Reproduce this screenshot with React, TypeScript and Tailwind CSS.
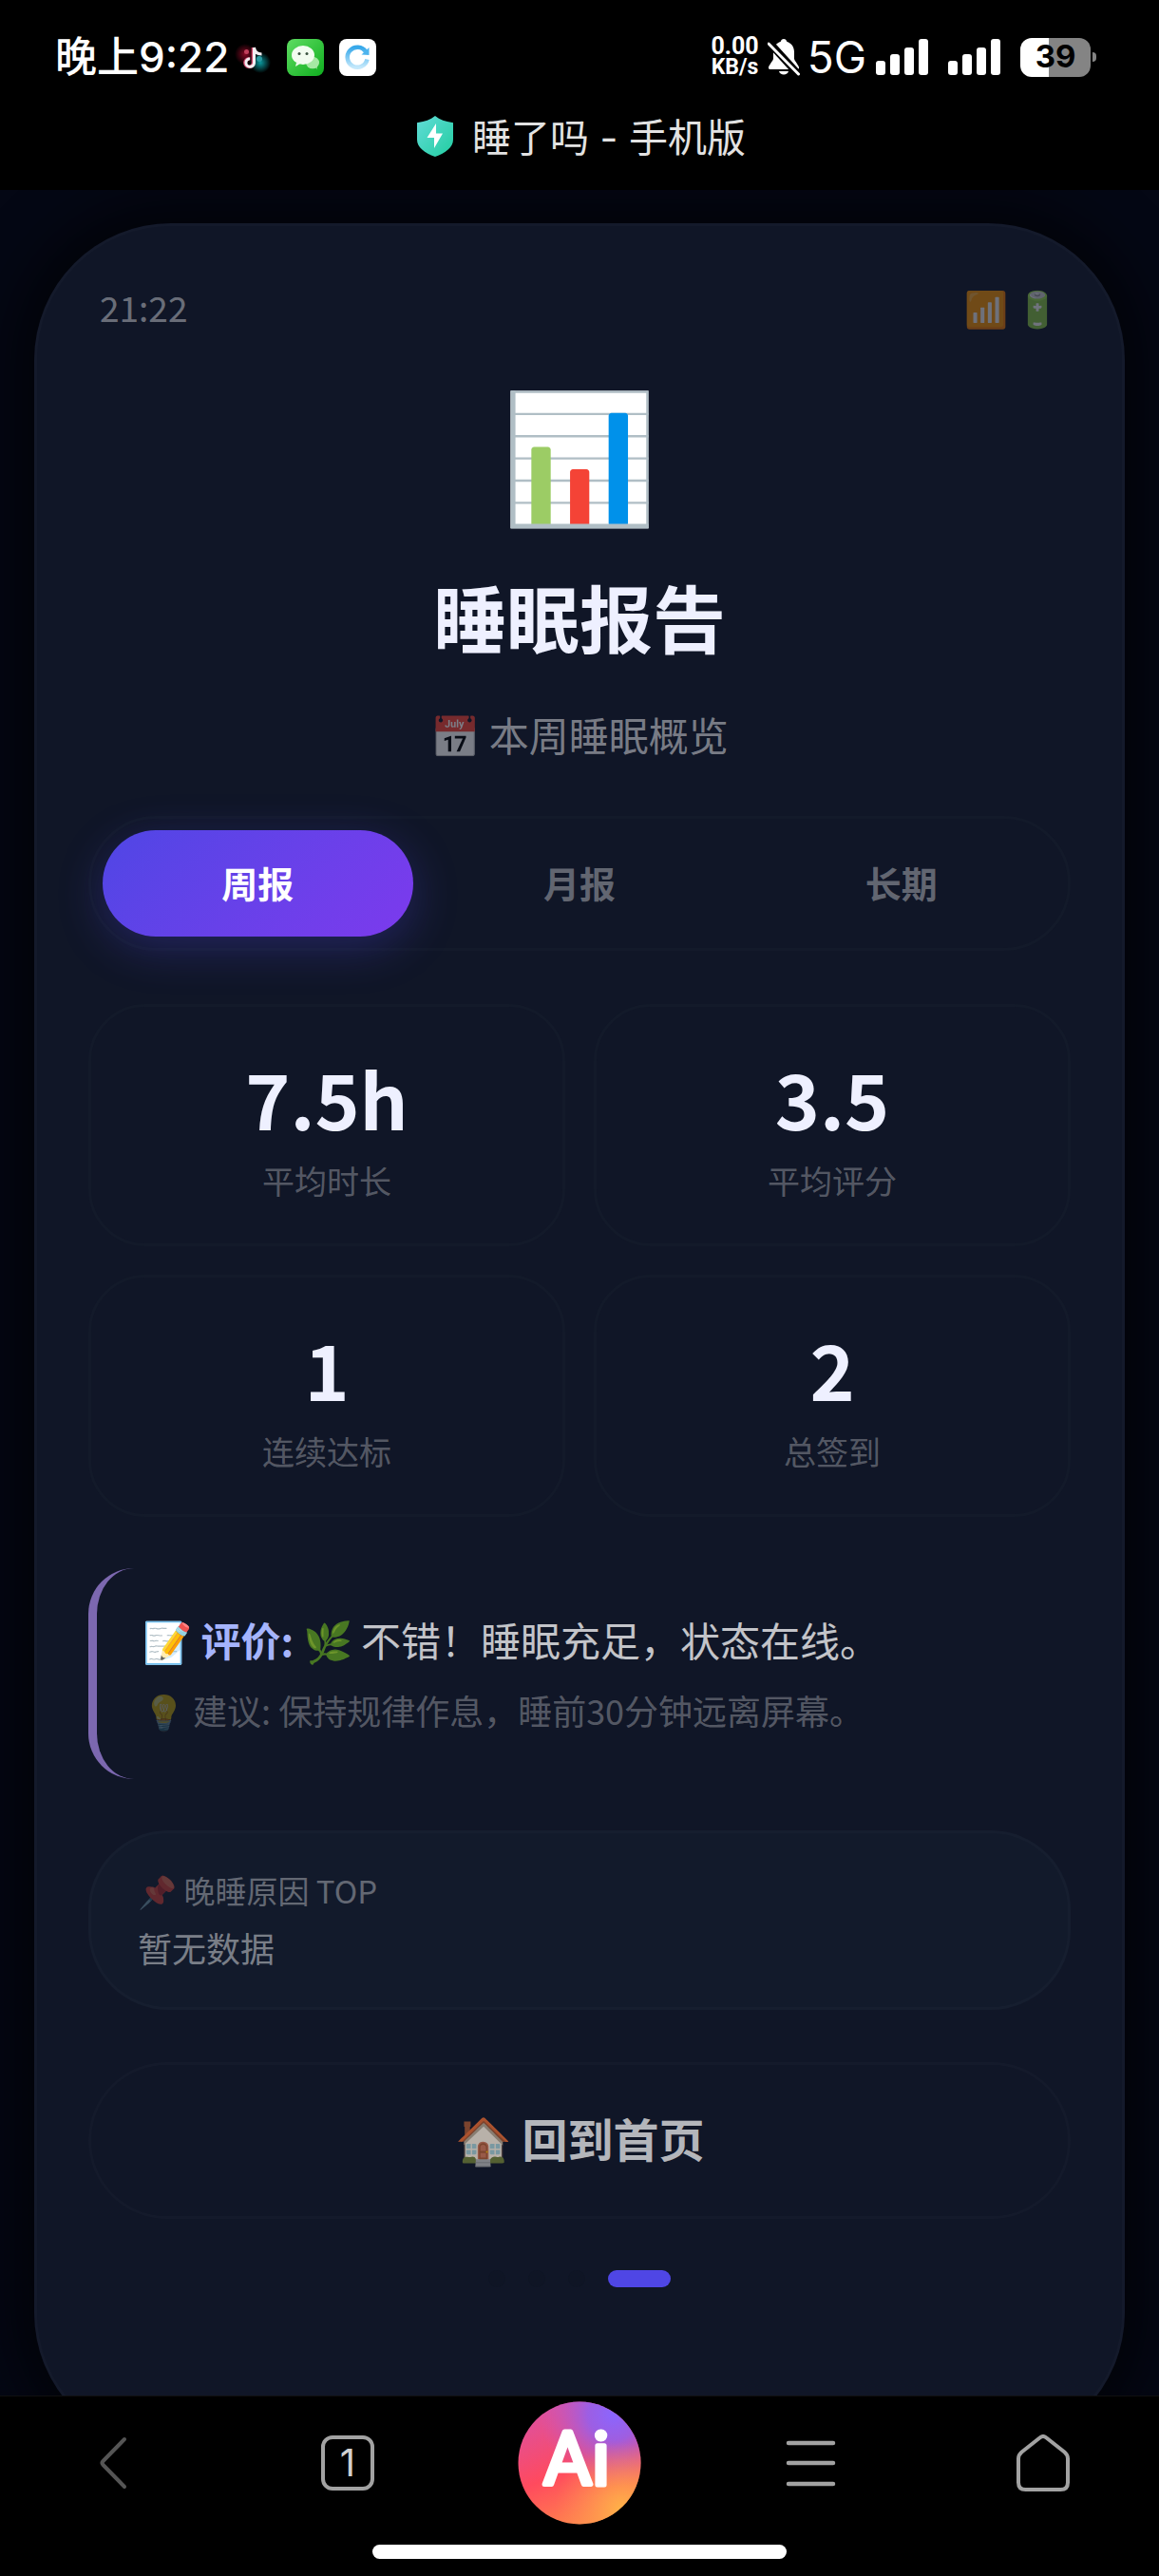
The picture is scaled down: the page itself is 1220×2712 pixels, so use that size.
import { useState } from 'react'
import { clsx } from 'clsx'

const TABS = ['周报', '月报', '长期']

const STATS = [
  { value: '7.5h', label: '平均时长' },
  { value: '3.5', label: '平均评分' },
  { value: '1', label: '连续达标' },
  { value: '2', label: '总签到' },
]

const PAGES = [0, 1, 2, 3]

function TiktokIcon() {
  return (
    <svg viewBox="0 0 39 39" className="size-[39px]">
      <defs>
        <radialGradient id="tkRed">
          <stop offset="0" stopColor="#e0103c" stopOpacity="0.6" />
          <stop offset="1" stopColor="#e0103c" stopOpacity="0" />
        </radialGradient>
        <radialGradient id="tkCyan">
          <stop offset="0" stopColor="#10d8e0" stopOpacity="0.7" />
          <stop offset="1" stopColor="#10d8e0" stopOpacity="0" />
        </radialGradient>
      </defs>
      <circle cx="11" cy="16" r="11" fill="url(#tkRed)" />
      <circle cx="27" cy="25" r="11" fill="url(#tkCyan)" />
      <circle cx="12.500" cy="13.500" r="2.500" fill="#c2405c" />
      <circle cx="26" cy="21" r="3" fill="#2b9aa2" />
      <path d="M20.500 9v16.500a4.300 4.300 0 1 1-4.300-4.800" fill="none" stroke="#d0456b" strokeWidth="3.600" transform="translate(-1 0)" />
      <path d="M20.500 9v16.500a4.300 4.300 0 1 1-4.300-4.800M20.500 9c.5 4.500 3.500 7 8 7" fill="none" stroke="#f3eef2" strokeWidth="3" />
    </svg>
  )
}

function WechatIcon() {
  return (
    <svg viewBox="0 0 39 39" className="size-[39px]">
      <defs>
        <linearGradient id="wxBg" x1="0" y1="0" x2="1" y2="1">
          <stop offset="0" stopColor="#5fdc62" />
          <stop offset="1" stopColor="#0fae1f" />
        </linearGradient>
      </defs>
      <rect width="39" height="39" rx="8" fill="url(#wxBg)" />
      <ellipse cx="27" cy="25" rx="7" ry="6.300" fill="#a6e9a4" />
      <path d="M29 29l3 3-1-4z" fill="#a6e9a4" />
      <ellipse cx="17" cy="17" rx="12" ry="10" fill="#f2fcf0" />
      <path d="M10 25l-1 4 5-3z" fill="#f2fcf0" />
      <circle cx="13" cy="15.500" r="1.500" fill="#3b5340" />
      <circle cx="21" cy="15.500" r="1.500" fill="#3b5340" />
    </svg>
  )
}

function SyncIcon() {
  return (
    <svg viewBox="0 0 39 39" className="size-[39px]">
      <defs>
        <linearGradient id="syncRing" x1="0" y1="0" x2="0" y2="1">
          <stop offset="0" stopColor="#36a8ea" />
          <stop offset="1" stopColor="#c4e8fb" />
        </linearGradient>
      </defs>
      <rect width="39" height="39" rx="8" fill="#fff" />
      <path d="M28 13.500a10.500 10.500 0 1 0 1.500 8" fill="none" stroke="url(#syncRing)" strokeWidth="4.500" />
      <path d="M31.500 9v8l-8-.5z" fill="#4db4ee" />
    </svg>
  )
}

function MutedBell() {
  return (
    <svg viewBox="0 0 34 40" className="h-10 w-[34px]" fill="#fff">
      <path d="M17 1c-1.600 0-3 1.200-3.200 2.700C9 5.300 6 9.500 6 14.500v7.300c0 2-4.500 6.500-5 9.200-.2 1.200.5 2 1.800 2h28.400c1.300 0 2-.8 1.800-2-.5-2.700-5-7.200-5-9.200v-7.300c0-5-3-9.200-7.800-10.800C20 2.200 18.600 1 17 1z" />
      <path d="M12 35h10c-.5 2.300-2.500 3.500-5 3.500S12.500 37.300 12 35z" />
      <path d="M1 4l32 35" stroke="#000" strokeWidth="8" />
      <path d="M1 6l31.500 32" stroke="#fff" strokeWidth="3" strokeLinecap="round" />
    </svg>
  )
}

function Signal() {
  return (
    <svg viewBox="0 0 56 38" className="h-[38px] w-14" fill="#fff">
      <rect x="0" y="23" width="10" height="15" rx="3" />
      <rect x="15" y="16" width="10" height="22" rx="3" />
      <rect x="30" y="9" width="10" height="29" rx="3" />
      <rect x="45" y="0" width="10" height="38" rx="3" />
    </svg>
  )
}

function SystemBar() {
  return (
    <div className="flex h-30 items-center justify-between pr-[66px] pl-[58px]">
      <div className="flex items-center">
        <span className="font-['Inter','Noto_Sans_CJK_SC',sans-serif] text-[44px] font-medium text-white">晚上9:22</span>
        <div className="ml-[6px] flex gap-4">
          <TiktokIcon />
          <WechatIcon />
          <SyncIcon />
        </div>
      </div>
      <div className="flex items-center text-white">
        <div className="text-center font-['Roboto',sans-serif] text-[25px] leading-[22px] font-bold">
          <div>0.00</div>
          <div className="text-[23px]">KB/s</div>
        </div>
        <div className="ml-[9px]"><MutedBell /></div>
        <span className="ml-2 font-['Inter',sans-serif] text-[46px] leading-none">5G</span>
        <div className="ml-[10px] flex gap-5">
          <Signal />
          <Signal />
        </div>
        <div className="ml-5 flex items-center gap-[2px]">
          <div className="flex h-[41px] w-[74px] items-center justify-center rounded-xl bg-linear-to-r from-white from-40% to-[#848484] to-40% font-['Inter',sans-serif] text-[33px] font-bold text-black">
            39
          </div>
          <div className="h-[10px] w-1 rounded-r-full bg-[#848484]" />
        </div>
      </div>
    </div>
  )
}

function TitleBar() {
  return (
    <div className="flex h-20 items-start justify-center gap-5 pl-1">
      <svg viewBox="0 0 38 43" className="mt-[2px] h-[43px] w-[38px]">
        <defs>
          <linearGradient id="shield" x1="0" y1="0" x2="1" y2="1">
            <stop offset="0" stopColor="#62dcd8" />
            <stop offset="1" stopColor="#22cda0" />
          </linearGradient>
        </defs>
        <path d="M19 0c5 4 11 6 18 7 1 0 1 .5 1 1v17c0 8-8 14-19 18C8 39 0 33 0 25V8c0-.5 0-1 1-1C8 6 14 4 19 0z" fill="url(#shield)" />
        <path d="M20 8L10.500 23H18v11l9-15.500h-7z" fill="#fff" />
      </svg>
      <h1 className="font-['Inter','Noto_Sans_CJK_SC',sans-serif] text-[41px] leading-[50px] text-[#e2e2e2]">睡了吗 - 手机版</h1>
    </div>
  )
}

function BottomNav() {
  return (
    <nav className="border-t border-[#101010] bg-black">
      <div className="grid grid-cols-5 items-center justify-items-center pt-[5px] text-[#a2a2a2]">
        <button aria-label="后退" className="text-[#555]">
          <svg viewBox="0 0 56 60" className="h-15 w-14" fill="none" stroke="currentColor" strokeWidth="4" strokeLinecap="round" strokeLinejoin="round">
            <path d="M37 5L14.500 28q-2 2 0 4L37 55" />
          </svg>
        </button>
        <button
          aria-label="窗口"
          className="flex h-[58px] w-14 items-center justify-center rounded-xl border-4 border-[#a2a2a2] font-['Inter',sans-serif] text-[40px] leading-none text-[#d0d0d0]"
        >
          1
        </button>
        <button aria-label="AI 助手">
          <svg viewBox="0 0 130 130" className="size-[130px]">
            <defs>
              <linearGradient id="aiBase" x1="0.200" y1="0.100" x2="0.600" y2="1">
                <stop offset="0" stopColor="#e0509a" />
                <stop offset="0.500" stopColor="#ff4a5e" />
                <stop offset="1" stopColor="#ff8a4a" />
              </linearGradient>
              <radialGradient id="aiViolet" cx="0.780" cy="0.100" r="0.600">
                <stop offset="0" stopColor="#8a66ff" />
                <stop offset="0.350" stopColor="#9460ee" stopOpacity="0.900" />
                <stop offset="1" stopColor="#c05ad0" stopOpacity="0" />
              </radialGradient>
              <radialGradient id="aiAmber" cx="0.850" cy="0.880" r="0.550">
                <stop offset="0" stopColor="#ffb347" />
                <stop offset="1" stopColor="#ff8a5a" stopOpacity="0" />
              </radialGradient>
            </defs>
            <circle cx="65" cy="65" r="64.500" fill="url(#aiBase)" />
            <circle cx="65" cy="65" r="64.500" fill="url(#aiViolet)" />
            <circle cx="65" cy="65" r="64.500" fill="url(#aiAmber)" />
            <text x="62" y="88" textAnchor="middle" fill="#fff" stroke="#fff" strokeWidth="5" strokeLinejoin="round" className="font-['Roboto',sans-serif] text-[78px] font-normal">
              Ai
            </text>
          </svg>
        </button>
        <button aria-label="菜单">
          <svg viewBox="0 0 56 60" className="h-15 w-14" fill="none" stroke="currentColor" strokeWidth="4.500" strokeLinecap="round">
            <path d="M4 9h47M4 30h47M4 52h47" />
          </svg>
        </button>
        <button aria-label="主页">
          <svg viewBox="0 0 56 60" className="h-15 w-14" fill="none" stroke="currentColor" strokeWidth="4" strokeLinejoin="round">
            <path d="M24.500 3.500q3.500-3 7 0l19 15q3.500 3 3.500 7v25q0 7.500-7.500 7.500h-37Q2 58 2 50.500v-25q0-4 3.500-7z" />
          </svg>
        </button>
      </div>
      <div className="mx-auto mt-[21px] mb-[18px] h-[15px] w-[436px] rounded-full bg-white" />
    </nav>
  )
}

export default function App() {
  const [tab, setTab] = useState(0)

  return (
    <div className="flex h-screen flex-col bg-black font-['Noto_Sans_CJK_SC',sans-serif]">
      <header>
        <SystemBar />
        <TitleBar />
      </header>

      <main className="min-h-0 flex-1 overflow-y-auto bg-[#040714] px-9 pt-[35px] [scrollbar-width:none]">
        <section className="flex flex-col rounded-[144px] border-[3px] border-white/2 bg-[#101627] px-[54px] pt-[58px] pb-[168px] shadow-[0_0_60px_20px_rgba(0,0,0,0.6)]">
          <div className="flex items-center justify-between px-3 text-[37px] leading-[54px] text-white/40">
            <span>21:22</span>
            <span>📶 🔋</span>
          </div>

          <div className="mt-[49px] text-center text-[132px] leading-[146px]">📊</div>
          <h2 className="mt-14 text-center text-[77px] leading-24 font-bold text-[#eef0ff]">睡眠报告</h2>
          <p className="mt-[46px] text-center text-[42px] leading-15 text-white/45">📅 本周睡眠概览</p>

          <div className="mt-14 flex gap-3 rounded-full border-[3px] border-[#131a2a] p-3">
            {TABS.map((name, i) => (
              <button
                key={name}
                onClick={() => setTab(i)}
                className={clsx(
                  'h-28 flex-1 rounded-full pb-1 text-[38px] font-bold',
                  i === tab
                    ? 'bg-linear-135 from-[#4f46e5] to-[#7c3aed] text-white shadow-[0_12px_48px_rgba(79,70,229,0.3)]'
                    : 'text-white/35'
                )}
              >
                {name}
              </button>
            ))}
          </div>

          <div className="mt-14 grid grid-cols-2 gap-[30px]">
            {STATS.map((s) => (
              <div key={s.label} className="rounded-[60px] border-[3px] border-[#131a2a] pt-[43px] pb-[41px] text-center">
                <div className="text-[80px] leading-[104px] font-bold text-[#eef0ff]">{s.value}</div>
                <div className="mt-[11px] text-[34px] leading-[50px] text-white/30">{s.label}</div>
              </div>
            ))}
          </div>

          <div className="mt-[54px] rounded-[48px] border-l-[9px] border-[#7c68b0] pt-[39px] pr-12 pb-[43px] pl-12">
            <p className="text-[42px] leading-[72px] text-white/75">
              <strong className="font-bold text-[#a5b4fc]">📝 评价:</strong> 🌿 不错！睡眠充足，状态在线。
            </p>
            <p className="mt-2 text-[36px] leading-15 text-white/30">💡 建议: 保持规律作息，睡前30分钟远离屏幕。</p>
          </div>

          <div className="mt-[54px] rounded-[84px] border-[3px] border-white/2 bg-[#121a2b] px-[49px] pt-[35px] pb-9">
            <h3 className="text-[33px] leading-[50px] text-white/35">📌 晚睡原因 TOP</h3>
            <p className="mt-2 text-[36px] leading-[54px] text-white/45">暂无数据</p>
          </div>

          <button className="mt-[55px] h-[165px] rounded-full border-[3px] border-white/2 pb-2 text-[48px] font-bold text-white/70">
            🏠 回到首页
          </button>

          <div className="mt-[54px] flex justify-center gap-6">
            {PAGES.map((p) => (
              <span key={p} className={clsx('h-[18px] rounded-full', p === 3 ? 'w-[66px] bg-[#4f46e5]' : 'w-[18px] bg-[#0f1525]')} />
            ))}
          </div>
        </section>
      </main>

      <BottomNav />
    </div>
  )
}
